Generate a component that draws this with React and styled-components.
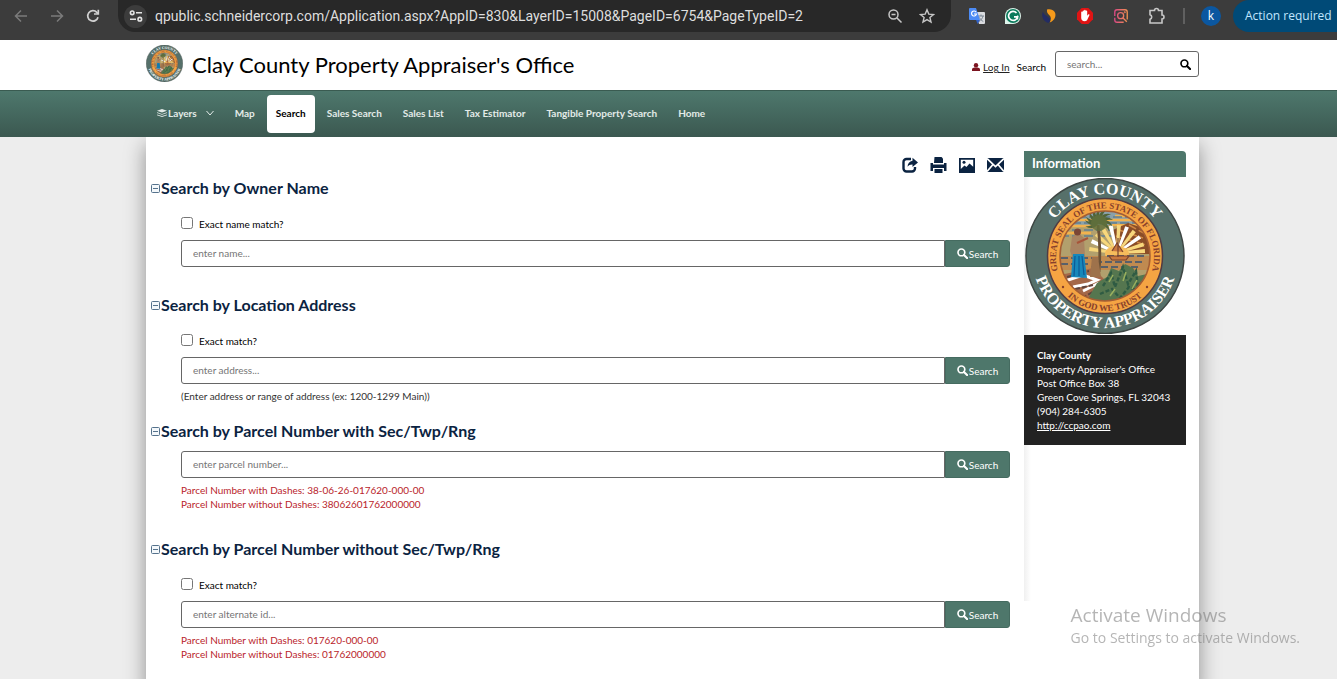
import React, { useId, useState } from 'react'
import styled, { createGlobalStyle } from 'styled-components'

const GlobalStyle = createGlobalStyle`
*{
    box-sizing: border-box;
}
body{
    margin: 0;
    background: #ededed;
    color: #000;
    font-family: Lato, 'Liberation Sans', sans-serif;
    font-size: 10px;
    line-height: 14px;
    overflow: hidden;
}
button, input{
    font-family: inherit;
    font-size: inherit;
    line-height: inherit;
    margin: 0;
}
svg{
    display: block;
    flex: none;
}
`

const navLinks = ['Map', 'Search', 'Sales Search', 'Sales List', 'Tax Estimator', 'Tangible Property Search', 'Home']

const searches = [
  { title: 'Search by Owner Name', match: 'Exact name match?', placeholder: 'enter name...' },
  {
    title: 'Search by Location Address',
    match: 'Exact match?',
    placeholder: 'enter address...',
    hint: '(Enter address or range of address (ex: 1200-1299 Main))',
    tight: true,
  },
  {
    title: 'Search by Parcel Number with Sec/Twp/Rng',
    placeholder: 'enter parcel number...',
    formats: ['Parcel Number with Dashes: 38-06-26-017620-000-00', 'Parcel Number without Dashes: 38062601762000000'],
  },
  {
    title: 'Search by Parcel Number without Sec/Twp/Rng',
    match: 'Exact match?',
    placeholder: 'enter alternate id...',
    formats: ['Parcel Number with Dashes: 017620-000-00', 'Parcel Number without Dashes: 01762000000'],
  },
]

// icons

const SearchIcon = ({ size = 11 }) => (
  <svg width={size} height={size} viewBox="0 0 12 12" fill="none" stroke="currentColor">
    <circle cx="4.8" cy="4.8" r="3.7" strokeWidth="1.8" />
    <path d="M7.6 7.6 11 11" strokeWidth="2.3" strokeLinecap="round" />
  </svg>
)

const BackIcon = () => (
  <svg width="16" height="16" viewBox="0 0 16 16" fill="none" stroke="#7b7b7b" strokeWidth="1.5">
    <path d="M14 8H3M8 2.5 2.5 8 8 13.5" />
  </svg>
)

const ForwardIcon = () => (
  <svg width="16" height="16" viewBox="0 0 16 16" fill="none" stroke="#7b7b7b" strokeWidth="1.5">
    <path d="M2 8h11M8 2.5 13.5 8 8 13.5" />
  </svg>
)

const ReloadIcon = () => (
  <svg width="16" height="16" viewBox="0 0 16 16" fill="none" stroke="#d0d0d0" strokeWidth="1.7">
    <path d="M13 9.2A5.2 5.2 0 1 1 11.8 4.4L13 5.6" />
    <path d="M13.3 1.8V6H9" />
  </svg>
)

const TuneIcon = () => (
  <svg width="14" height="14" viewBox="0 0 14 14" fill="none" stroke="#e3e3e3" strokeWidth="1.6">
    <circle cx="3.2" cy="3.8" r="1.8" />
    <path d="M7 3.8h6M1 10.2h6" />
    <circle cx="10.8" cy="10.2" r="1.8" />
  </svg>
)

const ZoomOutIcon = () => (
  <svg width="16" height="16" viewBox="0 0 16 16" fill="none" stroke="#c7c7c7" strokeWidth="1.5">
    <circle cx="6.5" cy="6.5" r="4.5" />
    <path d="M10 10l4.5 4.5M4.500 6.500h4" />
  </svg>
)

const StarIcon = () => (
  <svg width="16" height="16" viewBox="0 0 16 16" fill="none" stroke="#c7c7c7" strokeWidth="1.4">
    <path d="M8 1.8l1.8 4.3 4.7.4-3.6 3 1.1 4.6L8 11.600l-4 2.500 1.100-4.600-3.600-3 4.700-.4z" />
  </svg>
)

const TranslateIcon = () => (
  <svg width="18" height="18" viewBox="0 0 18 18">
    <path d="M7 5h9a1 1 0 0 1 1 1v10a1 1 0 0 1-1 1h-5z" fill="#dadce0" />
    <path d="M10 9h6M13 7.5V9M15 9c-.5 2.5-2 4-4 5.5M11.5 10.5c.8 1.8 2 3 3.8 4" fill="none" stroke="#7b8794" />
    <path d="M2 1h6l4 12H2a1 1 0 0 1-1-1V2a1 1 0 0 1 1-1z" fill="#4c8bf5" />
    <path d="M8 13h4l-2.5 4z" fill="#2f5fc4" />
    <path d="M8.200 5.200A2.500 2.500 0 1 0 8.500 7H6" fill="none" stroke="#fff" strokeWidth="1.2" />
  </svg>
)

const GrammarIcon = () => (
  <svg width="18" height="18" viewBox="0 0 18 18">
    <path d="M9 1a8 8 0 0 1 0 16H1V9a8 8 0 0 1 8-8z" fill="#dff5ec" />
    <circle cx="9" cy="9" r="7" fill="#0b7a5c" />
    <path d="M12.5 6A4.5 4.5 0 1 0 13.5 9.800H10" fill="none" stroke="#fff" strokeWidth="1.7" />
    <path d="M13.6 8.500v4" stroke="#fff" strokeWidth="1.3" />
  </svg>
)

const SwirlIcon = () => (
  <svg width="18" height="18" viewBox="0 0 18 18">
    <path d="M3 4.5C1 8 2.5 14.5 8.5 16c2-1.8 2.3-4 .4-5.6C6.5 8.500 4 8 3 4.500z" fill="#232c63" />
    <path d="M7 2.5c6-1.5 10 3 8 8-1 2.4-2.8 4.2-5.300 5 1.500-3 1.700-5.200-.3-7.300C7.600 6.500 6.600 5 7 2.500z" fill="#f59a1b" />
  </svg>
)

const BlockIcon = () => (
  <svg width="18" height="18" viewBox="0 0 18 18">
    <path d="M5.7 1h6.6L17 5.700v6.600L12.300 17H5.700L1 12.300V5.700z" fill="#e01414" />
    <path
      d="M5.200 8.500V5.300a.7.700 0 0 1 1.400 0V4.200a.7.700 0 0 1 1.500 0v-.7a.8.800 0 0 1 1.600 0v.7a.7.700 0 0 1 1.500 0v4.600l1-1.300c.6-.6 1.500 0 1.200.7l-2 4.300c-.5 1.200-1.300 1.700-2.600 1.700-2.400 0-3.600-1.300-3.600-3.500z"
      fill="#fff"
    />
  </svg>
)

const CaptureIcon = () => (
  <svg width="16" height="16" viewBox="0 0 18 18" fill="none" strokeWidth="1.5">
    <defs>
      <linearGradient id="capture" x1="0" y1="0" x2="18" y2="0" gradientUnits="userSpaceOnUse">
        <stop offset="0" stopColor="#d9408b" />
        <stop offset="1" stopColor="#f39a4a" />
      </linearGradient>
    </defs>
    <g stroke="url(#capture)">
      <path d="M2 9V4.5A2.5 2.5 0 0 1 4.5 2h9A2.500 2.500 0 0 1 16 4.500V13M2 11v2.500A2.500 2.500 0 0 0 4.500 16H12" />
      <circle cx="8.6" cy="8.6" r="3.4" />
      <path d="M11 11l4.500 4.500" />
      <circle cx="13.2" cy="4.800" r=".4" />
    </g>
  </svg>
)

const PuzzleIcon = () => (
  <svg width="18" height="18" viewBox="0 0 18 18" fill="none" stroke="#c7c7c7" strokeWidth="1.6">
    <path d="M2 3.500h4.500a2 2 0 0 1 4 0H14V8a2 2 0 0 1 0 4v4H2v-3.700a2.400 2.400 0 0 0 0-4.600z" />
  </svg>
)

const UserIcon = () => (
  <svg width="8" height="8" viewBox="0 0 8 8" fill="#7c1420">
    <circle cx="4" cy="2.2" r="2.2" />
    <path d="M0 8V6.300C0 5 1.500 4.400 4 4.400s4 .6 4 1.900V8z" />
  </svg>
)

const LayersIcon = () => (
  <svg width="10" height="8" viewBox="0 0 10 8" fill="currentColor">
    <path d="M5 0l5 1.700L5 3.500 0 1.700z" />
    <path d="M0 3.200l5 1.700 5-1.700v.9L5 5.800 0 4.100z" />
    <path d="M0 5.400l5 1.700 5-1.700v.8L5 8 0 6.200z" />
  </svg>
)

const ChevronIcon = () => (
  <svg width="8" height="6" viewBox="0 0 8 6" fill="none" stroke="currentColor">
    <path d="M.5 1 4 5l3.5-4" />
  </svg>
)

const CollapseIcon = () => (
  <svg width="9" height="9" viewBox="0 0 9 9" fill="#f4f8fb" stroke="#55728c">
    <rect x=".5" y=".5" width="8" height="8" rx="1" />
    <path d="M2 4.5h5" />
  </svg>
)

const ShareIcon = () => (
  <svg width="16" height="16" viewBox="0 0 16 16">
    <path d="M9 2H4.5A3 3 0 0 0 1.500 5v6.500a3 3 0 0 0 3 3H10a3 3 0 0 0 3-3V10" fill="none" stroke="currentColor" strokeWidth="2.4" />
    <path d="M10.500.7 16 5.500l-5.500 4.600V7.400C8.300 7.300 6.800 8 5.500 9.800c.2-3.300 2-5.700 5-6.100z" fill="currentColor" />
  </svg>
)

const PrintIcon = () => (
  <svg width="17" height="16" viewBox="0 0 17 16" fill="currentColor">
    <path d="M4.500 0h7l1.500 1.500V6H4z" />
    <path d="M.5 6H3v1.500h11V6h2.500v8H14v-3H3v3H.5z" />
    <path d="M2.500 8.500h12V11h-12zM4.500 12h8v4h-8z" />
  </svg>
)

const PictureIcon = () => (
  <svg width="16" height="15" viewBox="0 0 16 15">
    <path d="M0 0h16v15H0z" fill="currentColor" />
    <path d="M1.800 1.800h12.400v7L10.500 5.500 7.500 9 5.500 7.500 1.800 11z" fill="#fff" />
    <circle cx="5" cy="4.300" r="1.500" fill="currentColor" />
  </svg>
)

const MailIcon = () => (
  <svg width="17" height="14" viewBox="0 0 17 14">
    <path d="M0 0h17v14H0z" fill="currentColor" />
    <path d="M0 .5 8.500 8.500 17 .5M0 13.500l6-7M17 13.500l-6-7" fill="none" stroke="#fff" strokeWidth="1.7" />
  </svg>
)

const Seal = ({ width, height }) => {
  const id = useId()
  const fronds = [-170, -145, -120, -95, -70, -45, -20, 5, 30, 150, 175]
  const rays = [-172, -155, -138, -120, -103, -86, -69, -52, -35, -18, -4]
  return (
    <svg width={width} height={height} viewBox="0 0 160 156" preserveAspectRatio="none" role="img" aria-label="Clay County seal">
      <defs>
        <clipPath id={`${id}c`}>
          <circle cx="80" cy="78" r="45" />
        </clipPath>
        <path id={`${id}a`} d="M18 78a62 62 0 0 1 124 0" />
        <path id={`${id}b`} d="M7 78a73 72 0 0 0 146 0" />
        <path id={`${id}d`} d="M39.500 107A49 49 0 1 1 120.500 107" />
        <path id={`${id}e`} d="M25 78a55 55 0 0 0 110 0" />
      </defs>
      <ellipse cx="80" cy="78" rx="79" ry="77.5" fill="#56706a" stroke="#3e4643" strokeWidth="1.5" />
      <circle cx="80" cy="78" r="57.5" fill="#f5a443" stroke="#503b43" strokeWidth="1.5" />
      <g clipPath={`url(#${id}c)`}>
        <path d="M30 30h100v100H30z" fill="#b2a06d" />
        <path d="M30 30h100v17H30z" fill="#8aa1aa" />
        <path d="M43 42h70M38 48h35M90 38h35M36 55h30M87 47h36" stroke="#f2b34e" strokeWidth="2.5" />
        <path d="M40 39h75M35 45h75M35 52h85M35 58h75" stroke="#607f93" strokeWidth="1.3" strokeDasharray="9 3" />
        <path d="M88 52l15-7 12 4 12 12v15H88z" fill="#8a4d27" />
        <path d="M94 52l24 8M91 58l30 9M104 47l20 11" stroke="#d08742" strokeWidth="1.5" strokeDasharray="8 3" />
        {rays.map((angle) => (
          <path key={angle} d="M0-1 28-2V2L0 1z" fill={angle % 2 ? '#fff' : '#f7d77c'} transform={`translate(92 75) rotate(${angle})`} />
        ))}
        <ellipse cx="92" cy="76" rx="12" ry="8" fill="#f6bc5c" />
        <path d="M35 78h90v14H35z" fill="#c08a50" />
        <path d="M36 80h40M82 78h40M36 86h30M70 84h50M66 89h50" stroke="#59606a" strokeWidth="1.8" strokeDasharray="7 3" />
        <path d="M84 78h20l-3 4H87zM93 60v19M87 73l5-8 6 9" stroke="#7a4330" strokeWidth="1.2" fill="#c9783f" />
        <path d="M30 98l38-8 12 12-18 26H30z" fill="#a46849" />
        <path d="M40 103l18-6 14 5-9 4-15 3M58 113l16-8" stroke="#fff" strokeWidth="3" fill="none" />
        <path d="M42 99l22-6M50 111l18-4M57 120l16-9" stroke="#5d443d" strokeWidth="2" strokeDasharray="5 2" />
        <path d="M60 126l12-21 10-6 4-9 8 3 6-7 8 4 5 8 9-2 7 9-6 20-28 6z" fill="#55764f" />
        <path d="M78 108l8-13 4 14 8-20 5 17 8-13 2 17 9-11M75 116l12-5 8 9 9-11 12 5" fill="none" stroke="#2f5b43" strokeWidth="2.4" strokeDasharray="4 2" />
        <path d="M84 104l4-7M98 103l3-9M107 111l5-9M85 118l5-7" stroke="#9ab05e" strokeWidth="1.5" />
        <path d="M73 47q3 23 1 47" fill="none" stroke="#6b5136" strokeWidth="2.8" />
        {fronds.map((angle) => (
          <path key={angle} d="M0 0Q8-6 14 3Q7-1 0 2z" fill="#516438" transform={`translate(74 44) rotate(${angle})`} />
        ))}
        <circle cx="74" cy="45" r="8" fill="#61713c" opacity=".8" />
        <path d="M67 79h6l3 20H65z" fill="#9e724b" />
        <path d="M47 59l6-4 6 5 1 18-12 3-3-8z" fill="#a98462" />
        <circle cx="52.5" cy="54" r="3.5" fill="#7a4636" />
        <path d="M52 65l11-5" stroke="#a75439" strokeWidth="2" />
        <path d="M48 76h11l3 24-16-1z" fill="#1787ba" />
        <path d="M50 78l-1 20M54 78v20M57 78l2 19" stroke="#0c5a96" strokeWidth="1.2" />
      </g>
      <circle cx="80" cy="78" r="45" fill="none" stroke="#a35d34" strokeWidth="1.5" />
      <g fontFamily="'Liberation Serif', serif" fontWeight="700" textAnchor="middle">
        <g fill="#fff" fontSize="16">
          <text><textPath href={`#${id}a`} startOffset="50%">CLAY COUNTY</textPath></text>
          <text><textPath href={`#${id}b`} startOffset="50%">PROPERTY APPRAISER</textPath></text>
        </g>
        <g fill="#87402b" fontSize="9">
          <text><textPath href={`#${id}d`} startOffset="50%">GREAT SEAL OF THE STATE OF FLORIDA</textPath></text>
          <text><textPath href={`#${id}e`} startOffset="50%">IN GOD WE TRUST</textPath></text>
        </g>
      </g>
      <circle cx="38" cy="109" r="1.2" fill="#87402b" />
      <circle cx="122" cy="109" r="1.2" fill="#87402b" />
    </svg>
  )
}

const BrowserBar = () => {
  return (
    <Chrome>
      <ChromeButton aria-label="Back"><BackIcon /></ChromeButton>
      <ChromeButton aria-label="Forward"><ForwardIcon /></ChromeButton>
      <ChromeButton aria-label="Reload"><ReloadIcon /></ChromeButton>
      <Omnibox>
        <SiteInfo aria-label="Site information"><TuneIcon /></SiteInfo>
        <input
          aria-label="Address"
          readOnly
          value="qpublic.schneidercorp.com/Application.aspx?AppID=830&LayerID=15008&PageID=6754&PageTypeID=2"
        />
        <ChromeButton $width={32} aria-label="Zoom"><ZoomOutIcon /></ChromeButton>
        <ChromeButton $width={32} aria-label="Bookmark"><StarIcon /></ChromeButton>
      </Omnibox>
      <ChromeButton aria-label="Translate"><TranslateIcon /></ChromeButton>
      <ChromeButton aria-label="Grammar"><GrammarIcon /></ChromeButton>
      <ChromeButton aria-label="Analytics"><SwirlIcon /></ChromeButton>
      <ChromeButton aria-label="Ad blocker"><BlockIcon /></ChromeButton>
      <ChromeButton aria-label="Capture"><CaptureIcon /></ChromeButton>
      <ChromeButton aria-label="Extensions"><PuzzleIcon /></ChromeButton>
      <Divider />
      <Avatar>k</Avatar>
      <ActionPill>Action required</ActionPill>
    </Chrome>
  )
}

const SearchSection = ({ title, match, placeholder, hint, formats, tight }) => {
  const id = useId()
  const [checked, setChecked] = useState(false)
  return (
    <Section $tight={tight}>
      <SectionTitle>
        <CollapseIcon />
        {title}
      </SectionTitle>
      <SectionBody>
        {match && (
          <Match>
            <input type="checkbox" id={id} checked={checked} onChange={(e) => setChecked(e.target.checked)} />
            <label htmlFor={id}>{match}</label>
          </Match>
        )}
        <InputGroup>
          <input type="text" aria-label={title} placeholder={placeholder} />
          <button type="button"><SearchIcon /> Search</button>
        </InputGroup>
        {hint && <Note>{hint}</Note>}
        {formats && (
          <Note $red>
            {formats.map((line) => <div key={line}>{line}</div>)}
          </Note>
        )}
      </SectionBody>
    </Section>
  )
}

const App = () => {
  return (
    <>
      <GlobalStyle />
      <BrowserBar />
      <Header>
        <Seal width={37} height={37} />
        <h1>Clay County Property Appraiser's Office</h1>
        <Login>
          <UserIcon />
          <a href="#login">Log In</a>
          <label htmlFor="site-search">Search</label>
        </Login>
        <SiteSearch>
          <input id="site-search" type="text" placeholder="search..." />
          <button type="button" aria-label="Search"><SearchIcon /></button>
        </SiteSearch>
      </Header>
      <Nav>
        <NavLink href="#layers">
          <LayersIcon />
          Layers
          <Caret><ChevronIcon /></Caret>
        </NavLink>
        {navLinks.map((link) => (
          <NavLink key={link} href="#" $active={link === 'Search'}>{link}</NavLink>
        ))}
      </Nav>
      <Page>
        <main>
          <Toolbar>
            <button aria-label="Share"><ShareIcon /></button>
            <button aria-label="Print"><PrintIcon /></button>
            <button aria-label="Picture"><PictureIcon /></button>
            <button aria-label="Email"><MailIcon /></button>
          </Toolbar>
          {searches.map((search) => <SearchSection key={search.title} {...search} />)}
        </main>
        <Sidebar>
          <h2>Information</h2>
          <SealFrame><Seal width={160} height={156} /></SealFrame>
          <Contact>
            <strong>Clay County</strong>
            <span>Property Appraiser's Office</span>
            <span>Post Office Box 38</span>
            <span>Green Cove Springs, FL 32043</span>
            <span>(904) 284-6305</span>
            <a href="#ccpao">http://ccpao.com</a>
          </Contact>
        </Sidebar>
      </Page>
      <Watermark>
        <strong>Activate Windows</strong>
        <span>Go to Settings to activate Windows.</span>
      </Watermark>
    </>
  )
}

const Chrome = styled.div`
display: flex;
height: 40px;
padding-left: 3px;
padding-bottom: 8px;
background: #3c3c3c;
font-family: 'Open Sans', sans-serif;
`

const ChromeButton = styled.button`
display: flex;
align-items: center;
justify-content: center;
flex: none;
width: ${(props) => props.$width || 36}px;
padding: 0;
border: 0;
background: none;
`

const Omnibox = styled.div`
display: flex;
align-items: center;
flex: 1;
min-width: 0;
margin: 0 8px 0 7px;
padding: 0 8px 0 6px;
border-radius: 0 0 17px 17px;
background: #282828;
input{
    flex: 1;
    min-width: 0;
    padding: 0;
    border: 0;
    outline: 0;
    background: none;
    color: #dedede;
    font-family: Roboto, sans-serif;
    font-size: 14px;
    line-height: 20px;
}
`

const SiteInfo = styled(ChromeButton)`
width: 23px;
height: 23px;
margin-right: 8px;
border-radius: 50%;
background: #3c3c3c;
`

const Divider = styled.div`
align-self: center;
width: 2px;
height: 16px;
margin: 0 16px 0 8px;
background: #606060;
`

const Avatar = styled.button`
align-self: center;
width: 20px;
height: 20px;
padding: 0;
border: 0;
border-radius: 50%;
background: #0b57a0;
color: #fff;
font-size: 12px;
`

const ActionPill = styled.button`
width: 104px;
margin-left: 12px;
padding: 0 0 0 12px;
border: 0;
border-radius: 17px 0 0 17px;
background: #004a77;
color: #c2e7ff;
font-size: 12px;
text-align: left;
white-space: nowrap;
`

const Header = styled.header`
display: flex;
align-items: center;
height: 50px;
padding: 0 138px 4px 146px;
background: #fff;
h1{
    flex: 1;
    margin: 4px 0 0 9px;
    font-size: 22px;
    font-weight: 400;
    line-height: 28px;
}
`

const Login = styled.div`
display: flex;
align-items: center;
gap: 3px;
margin: 8px 9px 0 0;
a{
    color: #222;
}
label{
    margin-left: 4px;
}
`

const SiteSearch = styled.div`
display: flex;
align-items: center;
width: 144px;
height: 26px;
margin-top: 2px;
border: 1px solid #666;
border-radius: 3px;
input{
    flex: 1;
    min-width: 0;
    padding: 0 0 0 11px;
    border: 0;
    outline: 0;
    background: none;
}
button{
    padding: 0 7px;
    border: 0;
    background: none;
    color: #000;
}
`

const Nav = styled.nav`
display: flex;
gap: 3px;
height: 47px;
padding: 4px 138px 4px 148px;
border-top: 1px solid #3a5b51;
background: linear-gradient(#4e786d, #3b5850);
`

const NavLink = styled.a`
display: flex;
align-items: center;
gap: 1px;
padding: 0 9px 2px;
border-radius: 4px;
background: ${(props) => (props.$active ? '#fff' : 'none')};
color: ${(props) => (props.$active ? '#000' : '#e3ebe8')};
font-weight: 700;
text-decoration: none;
white-space: nowrap;
`

const Caret = styled.span`
margin-left: 8px;
`

const Page = styled.div`
display: grid;
grid-template-columns: minmax(0, 1fr) 162px;
align-items: start;
gap: 14px;
min-height: calc(100vh - 137px);
margin: 0 138px 0 146px;
padding-right: 13px;
background: #fff;
box-shadow: 0 8px 20px rgba(0, 0, 0, 0.4);
clip-path: inset(0 -30px);
`

const Toolbar = styled.div`
display: flex;
align-items: center;
justify-content: flex-end;
gap: 12px;
height: 16px;
margin: 20px 6px 5px 0;
button{
    padding: 0;
    border: 0;
    background: none;
    color: #0b2341;
}
`

const Section = styled.section`
margin-bottom: ${(props) => (props.$tight ? 18 : 28)}px;
`

const SectionTitle = styled.h2`
display: flex;
align-items: center;
gap: 1px;
margin: 0 0 10px 5px;
color: #0b2341;
font-size: 16px;
font-weight: 700;
line-height: 20px;
`

const SectionBody = styled.div`
padding-left: 35px;
`

const Match = styled.div`
display: flex;
align-items: center;
height: 16px;
margin: 18px 0 8px;
input{
    width: 12px;
    height: 12px;
    margin: 0 6px 2px 0;
}
`

const InputGroup = styled.div`
display: flex;
height: 27px;
input{
    flex: 1;
    min-width: 0;
    padding: 0 11px 2px;
    border: 1px solid #666;
    border-radius: 3px 0 0 3px;
    outline: 0;
}
button{
    display: flex;
    align-items: center;
    justify-content: center;
    gap: 1px;
    width: 65px;
    padding: 0;
    border: 1px solid #456b60;
    border-radius: 0 3px 3px 0;
    background: #4e776b;
    color: #fff;
}
`

const Note = styled.div`
margin-top: 5px;
color: ${(props) => (props.$red ? '#b9242b' : '#333')};
`

const Sidebar = styled.aside`
min-height: 450px;
margin-top: 14px;
background: linear-gradient(to right, #f0f0f0, #fff 7px);
h2{
    margin: 0;
    padding: 0 8px 2px;
    border-radius: 0 4px 0 0;
    background: #4e776b;
    color: #fff;
    font-size: 13px;
    line-height: 24px;
}
`

const SealFrame = styled.div`
display: flex;
justify-content: center;
padding: 1px 0;
`

const Contact = styled.address`
display: flex;
flex-direction: column;
align-items: flex-start;
padding: 13px;
background: #222;
color: #fff;
font-style: normal;
a{
    color: inherit;
}
`

const Watermark = styled.div`
position: fixed;
right: 37px;
bottom: 31px;
display: flex;
flex-direction: column;
color: rgba(120, 120, 120, 0.55);
font-family: 'Open Sans', sans-serif;
font-size: 14px;
line-height: 20px;
pointer-events: none;
strong{
    font-size: 19px;
    font-weight: 400;
    line-height: 26px;
}
`

export default App
